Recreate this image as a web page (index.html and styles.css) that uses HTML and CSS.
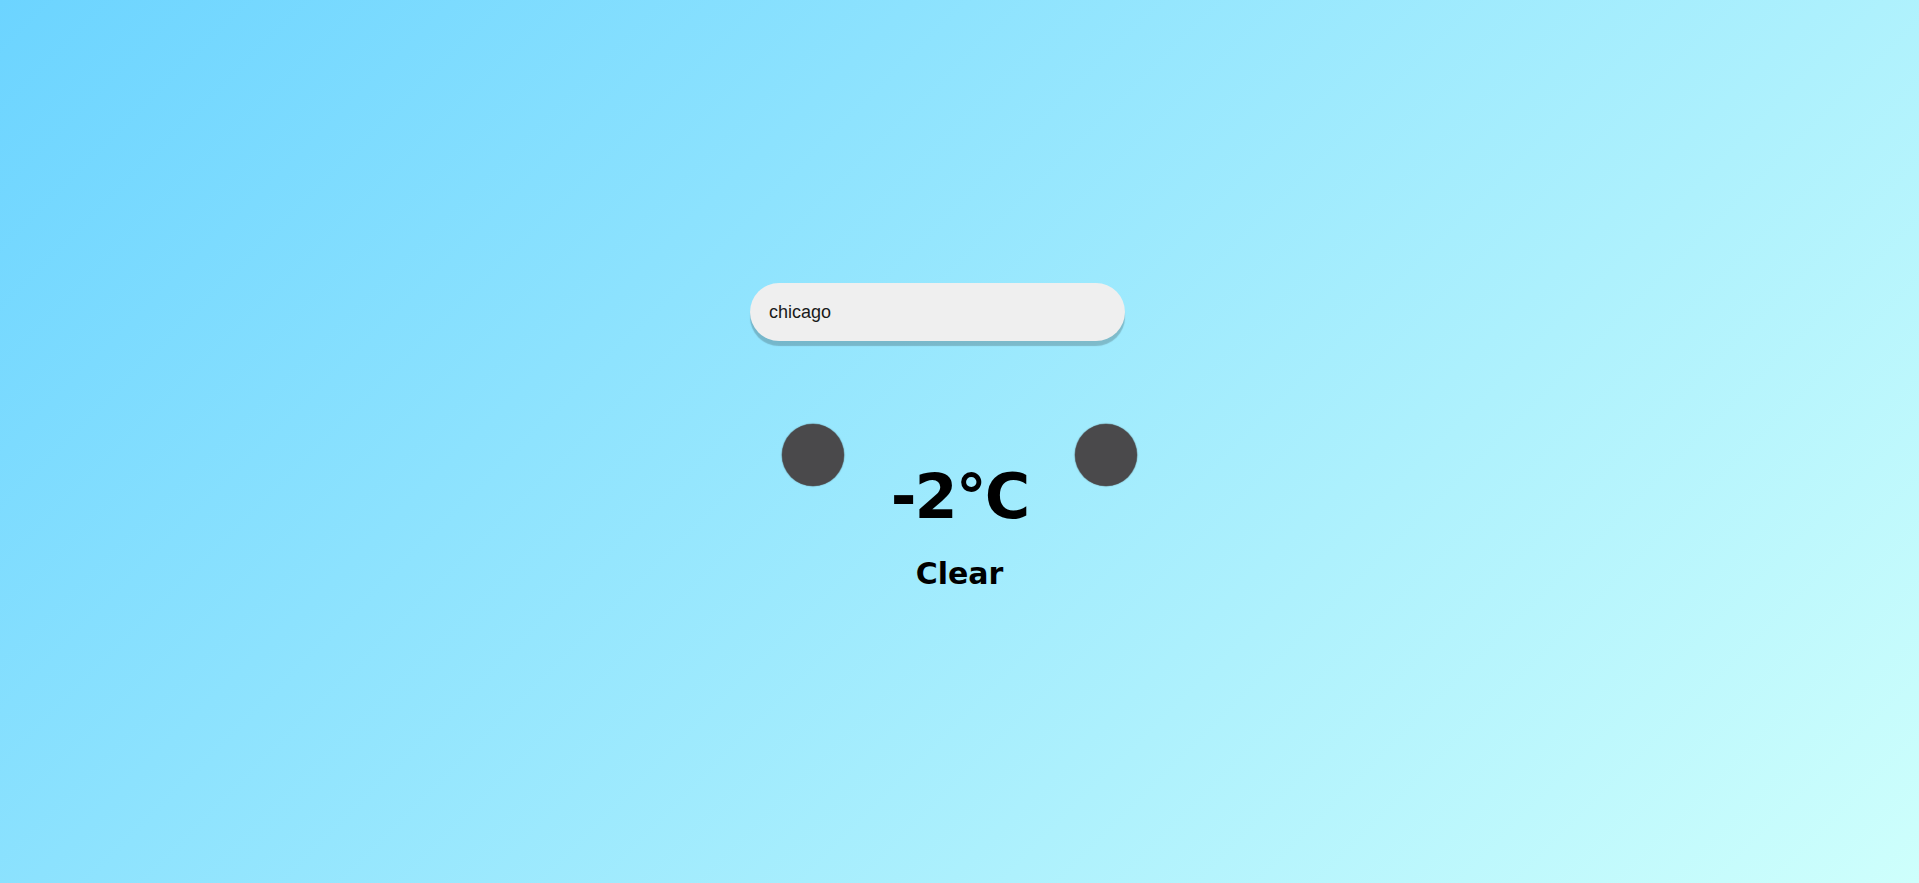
FILE: index.html
```html
<!DOCTYPE html>
<html lang="en">
<head>
<meta charset="utf-8">
<title>Weather</title>
<link rel="stylesheet" href="styles.css">
</head>
<body>
<main class="app">
  <form class="search">
    <input class="search-input" type="text" value="chicago">
    <span class="search-spacer"></span>
  </form>
  <section class="weather">
    <div class="icon"></div>
    <div class="info">
      <div class="temp">-2°C</div>
      <div class="desc">Clear</div>
    </div>
    <div class="icon"></div>
  </section>
</main>
</body>
</html>
```
FILE: styles.css
```css
html, body {
  margin: 0;
  height: 100%;
}
body {
  background: linear-gradient(135deg, #6cd4ff 0%, #cefffc 100%);
  font-family: "DejaVu Sans", sans-serif;
  color: #000;
}
.app {
  display: flex;
  flex-direction: column;
  align-items: center;
  padding-top: 283px;
}
.search {
  display: flex;
  margin: 0;
}
.search-input {
  width: 375px;
  height: 58px;
  box-sizing: border-box;
  border: none;
  outline: none;
  border-radius: 29px;
  background: #efefef;
  box-shadow: 0 5px 1px rgba(0, 0, 0, 0.2);
  padding: 0 19px;
  font-family: "Liberation Sans", Arial, sans-serif;
  font-size: 18px;
  color: #1a1a1a;
}
.search-spacer {
  width: 44px;
}
.weather {
  margin-top: 83px;
  width: 355px;
  display: flex;
  justify-content: space-between;
  align-items: flex-start;
}
.icon {
  width: 62px;
  height: 62px;
  border-radius: 50%;
  background: #4a494b;
  box-shadow: 0 0 1px 0.5px rgba(60, 60, 60, 0.6);
}
.info {
  margin-top: 42px;
  display: flex;
  flex-direction: column;
  align-items: center;
}
.temp {
  font-size: 62px;
  line-height: 62px;
  font-weight: 700;
  letter-spacing: -2px;
}
.desc {
  margin-top: 31px;
  font-size: 30px;
  line-height: 30px;
  font-weight: 700;
}
```
